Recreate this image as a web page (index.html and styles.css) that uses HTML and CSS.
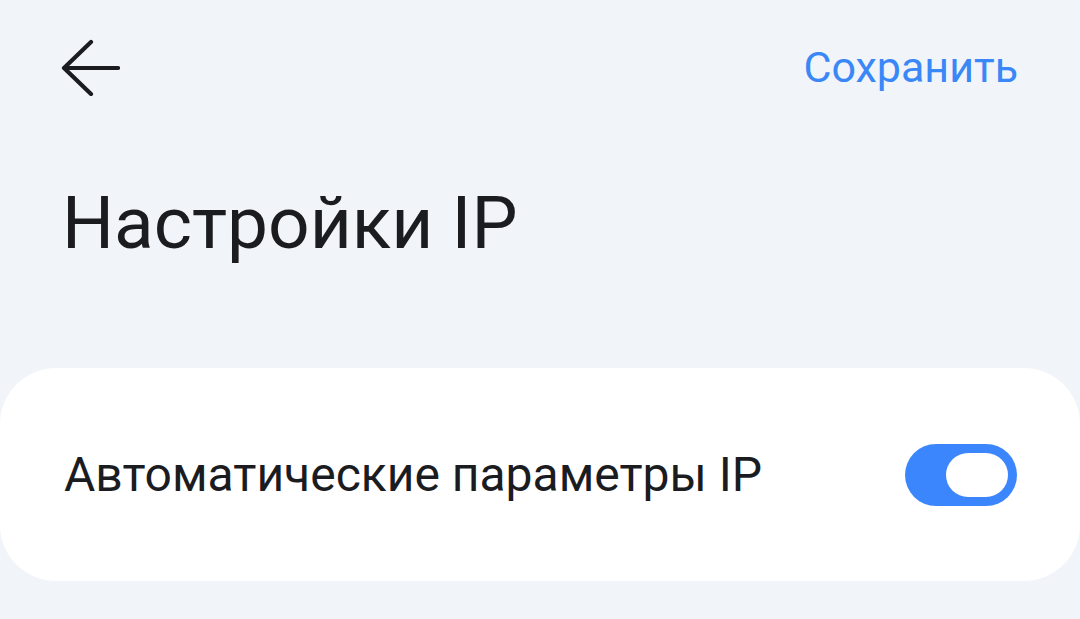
FILE: index.html
```html
<!DOCTYPE html>
<html lang="ru">
<head>
<meta charset="utf-8">
<link rel="stylesheet" href="styles.css">
</head>
<body>
<div class="screen">
  <header class="topbar">
    <button class="back" aria-label="Назад">
      <svg width="60" height="58" viewBox="0 0 60 58"><path d="M31 4 L4 30 L31 56 M4 30 H58" fill="none" stroke="#1b1c1f" stroke-width="4.2" stroke-linecap="round" stroke-linejoin="round"/></svg>
    </button>
    <span class="save">Сохранить</span>
  </header>
  <h1 class="title">Настройки IP</h1>
  <section class="card">
    <span class="label">Автоматические параметры IP</span>
    <span class="toggle"><span class="knob"></span></span>
  </section>
</div>
</body>
</html>
```

FILE: styles.css
```css
html, body {
  margin: 0;
  padding: 0;
  background: #f1f4f9;
}
.screen {
  width: 1080px;
  height: 619px;
  overflow: hidden;
  font-family: Roboto, "Noto Sans", sans-serif;
  color: #1b1c1f;
}
.topbar {
  display: flex;
  justify-content: space-between;
  align-items: center;
  padding: 37px 62px 0 60px;
  height: 60px;
}
.back {
  border: 0;
  background: none;
  padding: 0;
  display: flex;
}
.save {
  color: #3a87f7;
  font-size: 43px;
  line-height: 1;
}
.title {
  margin: 90px 0 0 62px;
  font-weight: 400;
  font-size: 73px;
  line-height: 1;
}
.card {
  margin-top: 108px;
  height: 213px;
  background: #ffffff;
  border-radius: 56px;
  display: flex;
  align-items: center;
  justify-content: space-between;
  padding: 0 63px 0 64px;
  box-sizing: border-box;
}
.label {
  font-size: 48px;
  line-height: 1;
}
.toggle {
  width: 112px;
  height: 62px;
  border-radius: 31px;
  background: #3b86fc;
  display: flex;
  align-items: center;
  justify-content: flex-end;
  padding-right: 9px;
  box-sizing: border-box;
}
.knob {
  width: 62px;
  height: 44px;
  border-radius: 22px;
  background: #ffffff;
}
```
